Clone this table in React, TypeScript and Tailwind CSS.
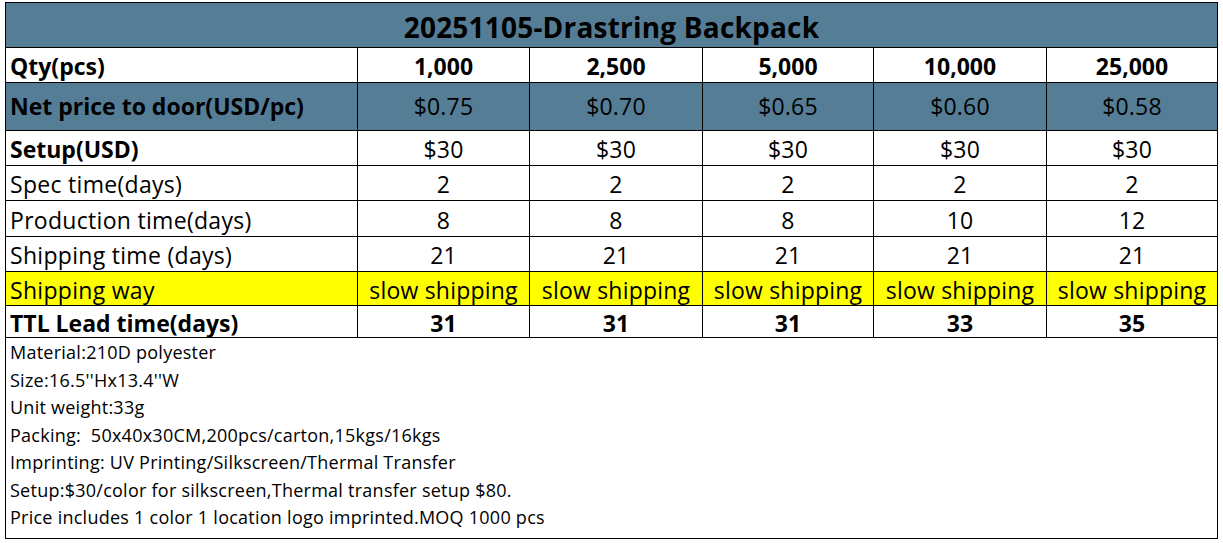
import React from "react";

const cols = ["w-[352px]", "w-[172px]", "w-[173px]", "w-[171px]", "w-[173px]", "w-[171px]"];

type Row = {
  label: string;
  values: string[];
  h: string;
  bg: string;
  pt: string;
  bold?: boolean;
  boldValues?: boolean;
};

const rows: Row[] = [
  { label: "Qty(pcs)", values: ["1,000", "2,500", "5,000", "10,000", "25,000"], h: "h-[35px]", bg: "bg-white", pt: "pt-[3px]", bold: true, boldValues: true },
  { label: "Net price to door(USD/pc)", values: ["$0.75", "$0.70", "$0.65", "$0.60", "$0.58"], h: "h-[48px]", bg: "bg-[#557d96]", pt: "pt-0", bold: true },
  { label: "Setup(USD)", values: ["$30", "$30", "$30", "$30", "$30"], h: "h-[35px]", bg: "bg-white", pt: "pt-[3px]", bold: true },
  { label: "Spec time(days)", values: ["2", "2", "2", "2", "2"], h: "h-[35px]", bg: "bg-white", pt: "pt-[3px]" },
  { label: "Production time(days)", values: ["8", "8", "8", "10", "12"], h: "h-[36px]", bg: "bg-white", pt: "pt-[3px]" },
  { label: "Shipping time (days)", values: ["21", "21", "21", "21", "21"], h: "h-[35px]", bg: "bg-white", pt: "pt-[3px]" },
  { label: "Shipping way", values: Array(5).fill("slow shipping"), h: "h-[34px]", bg: "bg-[#ffff00]", pt: "pt-[3px]" },
  { label: "TTL Lead time(days)", values: ["31", "31", "31", "33", "35"], h: "h-[32px]", bg: "bg-white", pt: "pt-[3px]", bold: true, boldValues: true },
];

const notes = [
  "Material:210D polyester",
  "Size:16.5''Hx13.4''W",
  "Unit weight:33g",
  "Packing:  50x40x30CM,200pcs/carton,15kgs/16kgs",
  "Imprinting: UV Printing/Silkscreen/Thermal Transfer",
  "Setup:$30/color for silkscreen,Thermal transfer setup $80.",
  "Price includes 1 color 1 location logo imprinted.MOQ 1000 pcs",
];

export default function App() {
  return (
    <div className="w-[1223px] h-[543px] bg-white pt-[2px] pl-[5px] text-black" style={{ fontFamily: "'Open Sans', Lato, sans-serif" }}>
      <table className="border-collapse table-fixed w-[1212px]">
        <colgroup>
          {cols.map((c, i) => (
            <col key={i} className={c} />
          ))}
        </colgroup>
        <tbody>
          <tr className="h-[45px] bg-[#557d96]">
            <td colSpan={6} className="border border-black text-center align-middle text-[28px] font-bold leading-none pt-[4px] tracking-[0.2px]">
              20251105-Drastring Backpack
            </td>
          </tr>
          {rows.map((r) => (
            <tr key={r.label} className={`${r.h} ${r.bg}`}>
              <td className={`border border-black px-[4px] text-[23px] leading-none whitespace-nowrap ${r.pt} ${r.bold ? "font-bold" : "tracking-[0.3px]"}`}>
                {r.label}
              </td>
              {r.values.map((v, i) => (
                <td key={i} className={`border border-black text-center text-[23px] leading-none whitespace-nowrap ${r.pt} ${r.boldValues ? "font-bold" : "tracking-[0.2px]"}`}>
                  {v}
                </td>
              ))}
            </tr>
          ))}
          <tr className="h-[201px]">
            <td colSpan={6} className="border border-black align-top px-[4px] pt-[1px]">
              <div className="flex flex-col text-[18px] leading-[27.5px] tracking-[0.25px]">
                {notes.map((n) => (
                  <div key={n} className="whitespace-pre">{n}</div>
                ))}
              </div>
            </td>
          </tr>
        </tbody>
      </table>
    </div>
  );
}
